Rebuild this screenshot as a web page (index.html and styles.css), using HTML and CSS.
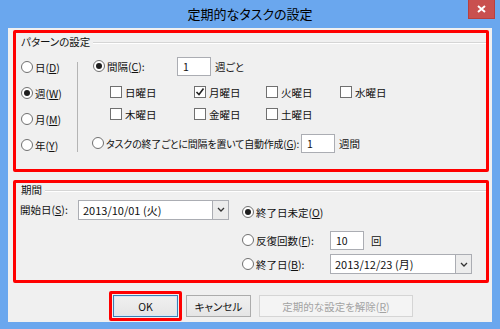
FILE: index.html
```html
<!DOCTYPE html>
<html lang="ja">
<head>
  <meta charset="UTF-8" />
  <title>定期的なタスクの設定</title>
  <link rel="stylesheet" href="styles.css">
</head>
<body>
  <div class="window">
    <div class="titlebar">
      <span></span>
      <div class="title">定期的なタスクの設定</div>
      <div class="close">
        <svg width="9" height="8" viewBox="0 0 9 8"><path d="M1 1 L8 7 M8 1 L1 7" stroke="#fff" stroke-width="2"/></svg>
      </div>
    </div>

    <main class="client">
      <!-- パターン -->
      <section class="mark pattern">
        <div class="group-head"><span>パターンの設定</span><i></i></div>
        <div class="pattern-body">
          <div class="kinds">
            <label class="opt"><span class="radio"></span><span>日(<u>D</u>)</span></label>
            <label class="opt"><span class="radio on"></span><span>週(<u>W</u>)</span></label>
            <label class="opt"><span class="radio"></span><span>月(<u>M</u>)</span></label>
            <label class="opt"><span class="radio"></span><span>年(<u>Y</u>)</span></label>
          </div>
          <div class="vsep"></div>
          <div class="detail">
            <div class="line">
              <label class="opt w84"><span class="radio on"></span><span>間隔(<u>C</u>):</span></label>
              <span class="field w34">1</span>
              <span class="unit">週ごと</span>
            </div>
            <div class="days">
              <label class="opt"><span class="check"></span><span>日曜日</span></label>
              <label class="opt"><span class="check on"><svg width="10" height="10" viewBox="0 0 10 10"><path d="M1.5 5 L4 7.5 L8.5 1.5" fill="none" stroke="#222" stroke-width="1.6"/></svg></span><span>月曜日</span></label>
              <label class="opt"><span class="check"></span><span>火曜日</span></label>
              <label class="opt"><span class="check"></span><span>水曜日</span></label>
              <label class="opt"><span class="check"></span><span>木曜日</span></label>
              <label class="opt"><span class="check"></span><span>金曜日</span></label>
              <label class="opt"><span class="check"></span><span>土曜日</span></label>
            </div>
            <div class="line regen">
              <label class="opt"><span class="radio"></span><span class="tight">タスクの終了ごとに間隔を置いて自動作成(<u>G</u>):</span></label>
              <span class="field w34">1</span>
              <span class="unit">週間</span>
            </div>
          </div>
        </div>
      </section>

      <!-- 期間 -->
      <section class="mark period">
        <div class="group-head"><span>期間</span><i></i></div>
        <div class="period-body">
          <div class="start">
            <span class="w58">開始日(<u>S</u>):</span>
            <div class="combo w151">
              <span class="combo-text">2013/10/01 (火)</span>
              <span class="drop"><svg width="8" height="5" viewBox="0 0 8 5"><path d="M1 1 L4 4 L7 1" fill="none" stroke="#333" stroke-width="1.3"/></svg></span>
            </div>
          </div>
          <div class="ends">
            <div class="line">
              <label class="opt"><span class="radio on"></span><span>終了日未定(<u>O</u>)</span></label>
            </div>
            <div class="line count">
              <label class="opt w88"><span class="radio"></span><span>反復回数(<u>F</u>):</span></label>
              <span class="field w34">10</span>
              <span class="unit wide">回</span>
            </div>
            <div class="line until">
              <label class="opt w88"><span class="radio"></span><span>終了日(<u>B</u>):</span></label>
              <div class="combo w142">
                <span class="combo-text">2013/12/23 (月)</span>
                <span class="drop"><svg width="8" height="5" viewBox="0 0 8 5"><path d="M1 1 L4 4 L7 1" fill="none" stroke="#333" stroke-width="1.3"/></svg></span>
              </div>
            </div>
          </div>
        </div>
      </section>

      <div class="actions">
        <div class="focus-mark"><button class="btn ok">OK</button></div>
        <button class="btn cancel">キャンセル</button>
        <button class="btn off"><span>定期的な設定を解除(<u>R</u>)</span></button>
      </div>
    </main>
  </div>
</body>
</html>
```

FILE: styles.css
```css
* {
  box-sizing: border-box;
}

body {
  margin: 0;
  background: #6aa7ee;
  font-family: "Noto Sans CJK JP", "Noto Sans", sans-serif;
  font-size: 10.5px;
  font-feature-settings: "palt";
  color: #111;
}

.window {
  width: 500px;
  height: 329px;
  display: flex;
  flex-direction: column;
}

.titlebar {
  height: 28px;
  display: grid;
  grid-template-columns: 1fr auto 1fr;
  align-items: start;
}

.title {
  font-size: 13px;
  line-height: 28px;
  color: #000;
}

.close {
  justify-self: end;
  margin-right: 5px;
  width: 27px;
  height: 19px;
  background: #c9504f;
  border: 1px solid #b8403f;
  border-top: none;
  display: flex;
  align-items: center;
  justify-content: center;
}

.client {
  margin: 0 8px;
  height: 294px;
  background: #f0f0f0;
  padding: 2px 3px 0 5px;
}

u {
  text-decoration: underline;
  text-underline-offset: 1px;
}

/* red annotation boxes */
.mark {
  border: 3px solid #ff0000;
  border-radius: 2px;
}

.pattern {
  height: 142px;
}

.period {
  height: 103px;
  margin-top: 8px;
}

.group-head {
  display: flex;
  align-items: center;
  gap: 3px;
  height: 14px;
  line-height: 14px;
  padding-left: 5px;
}

.pattern .group-head {
  margin-top: 2px;
}

.group-head i {
  flex: 1;
  border-top: 1px solid #d5d5d5;
  border-bottom: 1px solid #fff;
  margin-top: 1px;
}

/* controls */
.opt {
  display: flex;
  align-items: center;
  gap: 2px;
  white-space: nowrap;
}

.tight {
  font-size: 10px;
  letter-spacing: -0.2px;
  margin-right: 2px;
}

.radio {
  width: 12px;
  height: 12px;
  border: 1px solid #707070;
  border-radius: 50%;
  background: #fff;
  display: inline-flex;
  align-items: center;
  justify-content: center;
  flex: none;
}

.radio.on::after {
  content: "";
  width: 6px;
  height: 6px;
  border-radius: 50%;
  background: #1e1e1e;
}

.check {
  width: 12px;
  height: 12px;
  border: 1px solid #707070;
  background: #fff;
  display: inline-flex;
  align-items: center;
  justify-content: center;
  margin-right: 1px;
  flex: none;
}

.field {
  height: 19px;
  border: 1px solid #abadb3;
  background: #fff;
  padding-left: 5px;
  line-height: 17px;
  flex: none;
}

.unit {
  margin-left: 4px;
}

.unit.wide {
  margin-left: 7px;
}

.combo {
  height: 20px;
  display: flex;
  border: 1px solid #abadb3;
  background: #fff;
}

.combo-text {
  flex: 1;
  padding-left: 4px;
  line-height: 18px;
  font-size: 11px;
}

.drop {
  width: 16px;
  border-left: 1px solid #abadb3;
  background: #ececec;
  display: flex;
  align-items: center;
  justify-content: center;
}

.w34 { width: 34px; }
.w58 { width: 58px; }
.w84 { width: 84px; }
.w88 { width: 88px; }
.w142 { width: 142px; }
.w151 { width: 151px; }

/* pattern body */
.pattern-body {
  display: flex;
  margin-top: 5px;
}

.kinds {
  width: 61px;
  padding-left: 5px;
  display: grid;
  grid-auto-rows: 26px;
  align-items: center;
}

.vsep {
  width: 1px;
  height: 90px;
  margin-top: 8px;
  background: #b4b4b4;
}

.detail {
  padding: 2px 0 0 15px;
}

.line {
  display: flex;
  align-items: center;
  height: 20px;
}

.days {
  display: grid;
  grid-template-columns: 84px 72px 74px 60px;
  grid-auto-rows: 22px;
  align-items: center;
  margin: 5px 0 0 17px;
}

.regen {
  margin-top: 8px;
  margin-left: -1px;
}

/* period body */
.period-body {
  display: flex;
  margin-top: 3px;
}

.start {
  display: flex;
  align-items: center;
  height: 19px;
  padding-left: 4px;
}

.ends {
  margin-left: 13px;
  padding-top: 2px;
}

.count {
  margin-top: 8px;
}

.until {
  margin-top: 4px;
}

/* buttons */
.actions {
  display: flex;
  align-items: center;
  margin-top: 8px;
  padding-left: 96px;
}

.focus-mark {
  border: 3px solid #ff0000;
  border-radius: 2px;
  padding: 1px;
}

.btn {
  height: 22px;
  border: 1px solid #acacac;
  background: linear-gradient(#f0f0f0, #e5e5e5);
  font-family: inherit;
  font-size: 10.5px;
  font-feature-settings: "palt";
  color: #111;
  padding: 0;
  display: flex;
  align-items: center;
  justify-content: center;
}

.ok {
  width: 65px;
  border-color: #3c7fb1;
  box-shadow: inset 0 0 0 1px #d6e9f9;
}

.cancel {
  width: 65px;
  margin-left: 4px;
}

.off {
  width: 154px;
  margin-left: 8px;
  color: #a3a3a3;
  border-color: #d5d5d5;
  background: #f4f4f4;
}
```
